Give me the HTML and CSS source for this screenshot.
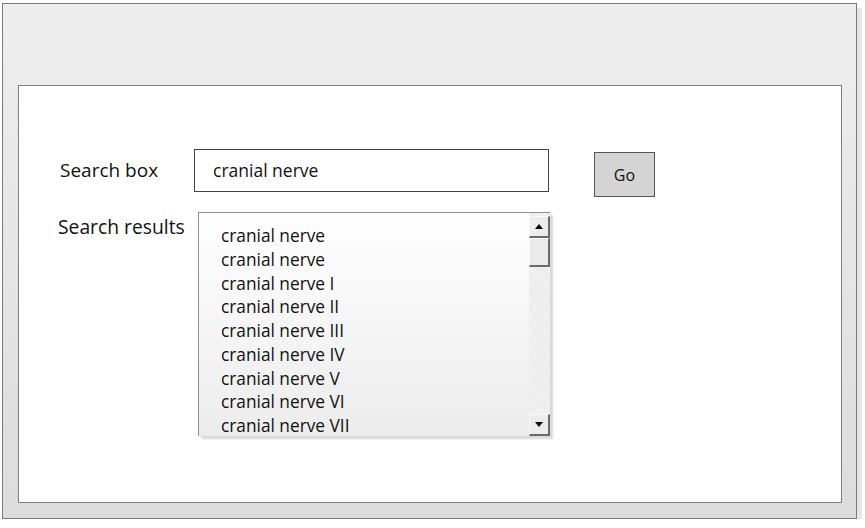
FILE: index.html
```html
<!DOCTYPE html>
<html>
<head>
<meta charset="utf-8">
<link rel="stylesheet" href="styles.css">
</head>
<body>
<div class="window">
  <div class="panel">
    <div class="row row-search">
      <span class="label label-box">Search box</span>
      <div class="input">cranial nerve</div>
      <div class="go">Go</div>
    </div>
    <div class="row row-results">
      <span class="label label-results">Search results</span>
      <div class="listbox">
        <ul class="items">
          <li>cranial nerve</li>
          <li>cranial nerve</li>
          <li>cranial nerve I</li>
          <li>cranial nerve II</li>
          <li>cranial nerve III</li>
          <li>cranial nerve IV</li>
          <li>cranial nerve V</li>
          <li>cranial nerve VI</li>
          <li>cranial nerve VII</li>
        </ul>
        <div class="scrollbar">
          <div class="sb-btn"><span class="tri-up"></span></div>
          <div class="sb-thumb"></div>
          <div class="sb-track"></div>
          <div class="sb-btn"><span class="tri-down"></span></div>
        </div>
      </div>
    </div>
  </div>
</div>
</body>
</html>
```

FILE: styles.css
```css
html, body {
  margin: 0;
  padding: 0;
  background: #ffffff;
  font-family: "Open Sans", "Noto Sans", sans-serif;
  color: #111;
}
.window {
  margin: 3px 0 0 2px;
  width: 838px;
  height: 433px;
  border: 1px solid #7a7a7a;
  background: linear-gradient(#eeeeee, #dcdcdc);
  box-shadow: 5px 5px 0 #e6e6e6;
  padding: 81px 0 0 15px;
}
.panel {
  width: 822px;
  height: 416px;
  border: 1px solid #808080;
  background: #ffffff;
}
.row {
  display: flex;
}
.row-search {
  margin-top: 63px;
  align-items: flex-start;
}
.label {
  font-size: 19px;
  color: #111;
}
.label-box {
  margin-left: 41px;
  margin-top: 8px;
  width: 134px;
}
.input {
  width: 355px;
  height: 43px;
  border: 1px solid #444;
  font-size: 17.5px;
  line-height: 41px;
  padding-left: 18px;
  box-sizing: border-box;
}
.go {
  margin-left: 45px;
  margin-top: 3px;
  width: 61px;
  height: 45px;
  box-sizing: border-box;
  border: 1px solid #555;
  background: #d4d4d4;
  font-size: 16px;
  display: flex;
  align-items: center;
  justify-content: center;
}
.row-results {
  margin-top: 15px;
  align-items: flex-start;
}
.label-results {
  margin-left: 39px;
  margin-top: 1px;
  width: 140px;
  font-size: 19.3px;
}
.listbox {
  width: 352px;
  height: 224px;
  box-sizing: border-box;
  border-top: 1px solid #909090;
  border-left: 1px solid #909090;
  background: linear-gradient(#ffffff, #ececec);
  display: flex;
  box-shadow: 3px 3px 2px #d8d8d8;
}
.items {
  list-style: none;
  margin: 0;
  padding: 11px 0 0 22px;
  flex: 1;
  font-size: 17.3px;
  line-height: 23.75px;
  overflow: hidden;
}
.scrollbar {
  width: 21px;
  display: flex;
  flex-direction: column;
  padding-top: 3px;
  background: repeating-linear-gradient(45deg, #f3f3f3 0 1px, #eaeaea 1px 2px);
}
.sb-btn {
  height: 22px;
  box-sizing: border-box;
  background: #ececec;
  border-top: 1px solid #fafafa;
  border-left: 1px solid #fafafa;
  border-right: 2px solid #6a6a6a;
  border-bottom: 2px solid #6a6a6a;
  display: flex;
  align-items: center;
  justify-content: center;
}
.sb-thumb {
  height: 29px;
  box-sizing: border-box;
  background: #eaeaea;
  border-top: 1px solid #fafafa;
  border-left: 1px solid #fafafa;
  border-right: 2px solid #6a6a6a;
  border-bottom: 2px solid #6a6a6a;
}
.sb-track {
  flex: 1;
}
.tri-up {
  width: 0;
  height: 0;
  border-left: 4px solid transparent;
  border-right: 4px solid transparent;
  border-bottom: 5px solid #000;
}
.tri-down {
  width: 0;
  height: 0;
  border-left: 4px solid transparent;
  border-right: 4px solid transparent;
  border-top: 5px solid #000;
}
```
